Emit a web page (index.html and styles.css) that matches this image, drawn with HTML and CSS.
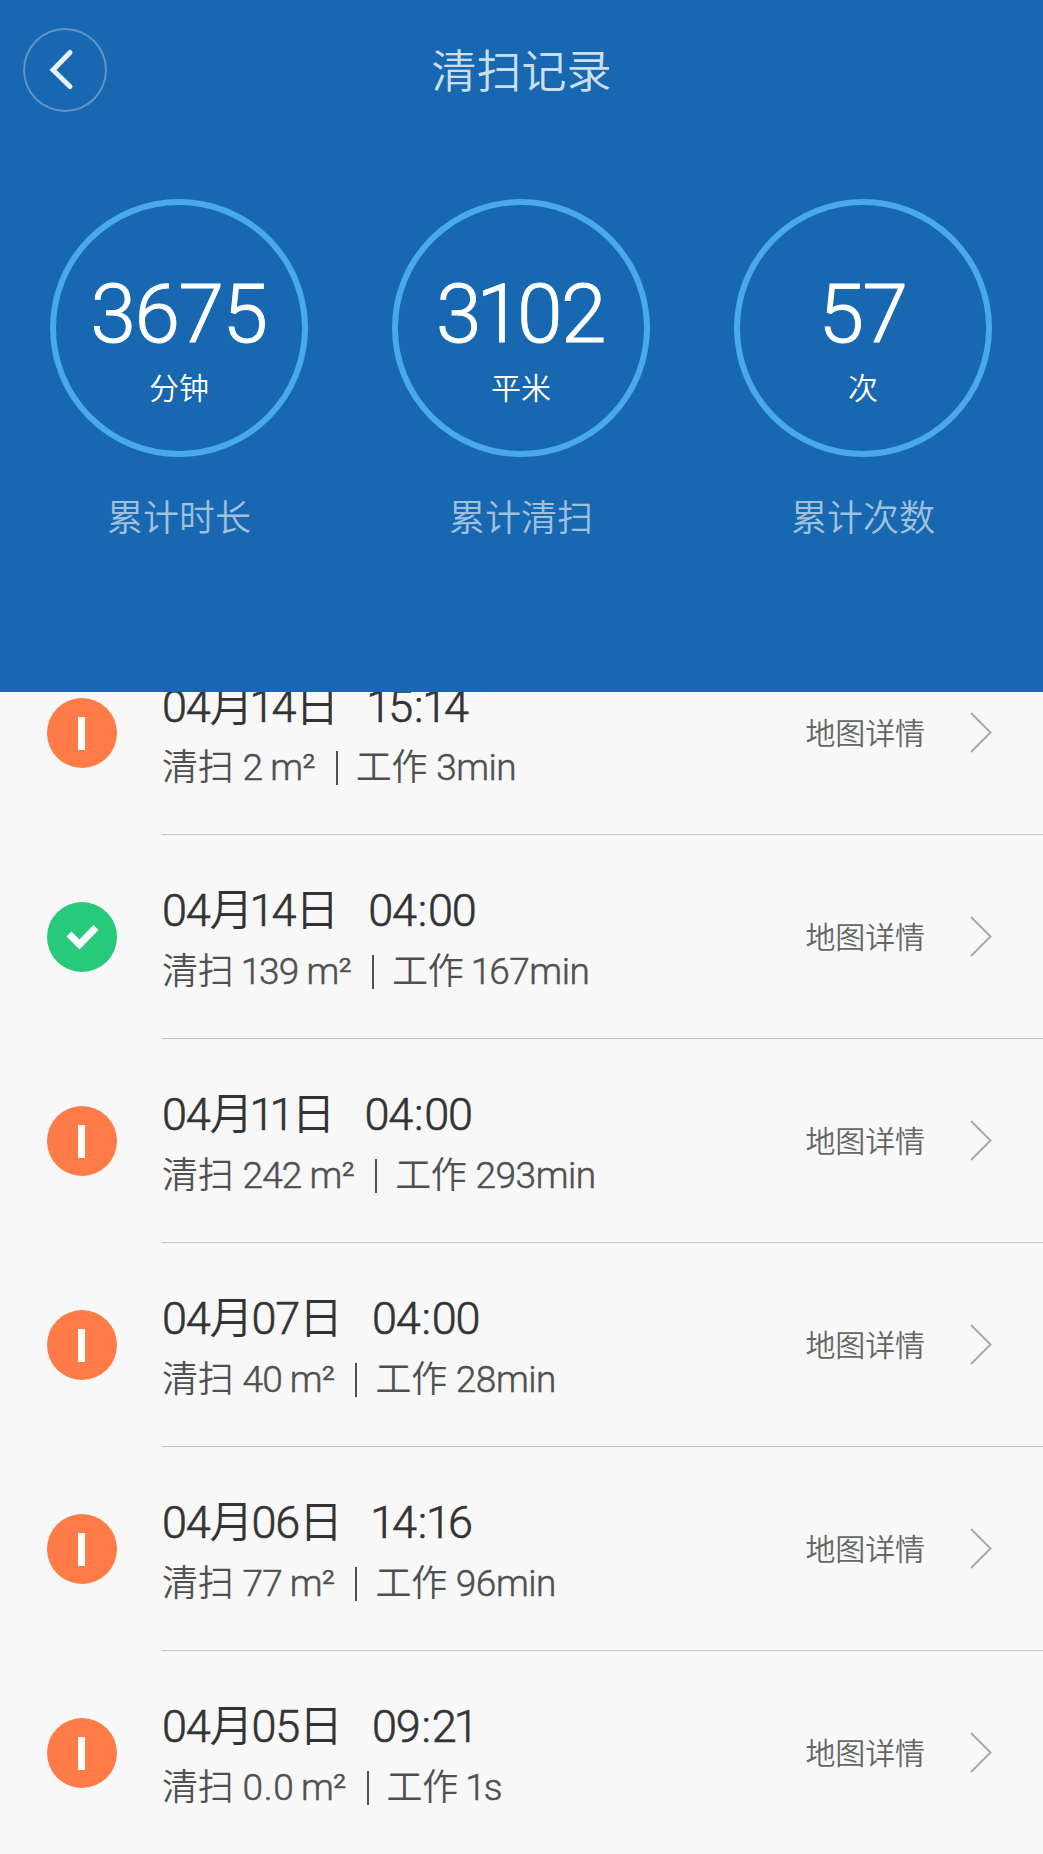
FILE: index.html
```html
<!DOCTYPE html>
<html lang="zh-CN">
  <head>
    <meta charset="UTF-8" />
    <meta name="viewport" content="width=device-width, initial-scale=1.0" />
    <title>清扫记录</title>
    <link rel="stylesheet" href="styles.css">
  </head>
  <body>
    <header class="header">
      <div class="topbar">
        <button class="back">
          <svg width="84" height="84" viewBox="0 0 84 84">
            <path d="M47 24.5 L30 42 L47 58.5" />
          </svg>
        </button>
        <h1 class="title">清扫记录</h1>
      </div>
      <div class="stats">
        <div class="stat">
          <div class="ring">
            <span class="num">3675</span>
            <span class="unit">分钟</span>
          </div>
          <p class="label">累计时长</p>
        </div>
        <div class="stat">
          <div class="ring">
            <span class="num">3<i>1</i>02</span>
            <span class="unit">平米</span>
          </div>
          <p class="label">累计清扫</p>
        </div>
        <div class="stat">
          <div class="ring">
            <span class="num">57</span>
            <span class="unit">次</span>
          </div>
          <p class="label">累计次数</p>
        </div>
      </div>
    </header>

    <main class="list">
      <div class="row">
        <svg class="icon" viewBox="0 0 70 70"><circle class="warn" cx="35" cy="35" r="35" /><rect x="31" y="19" width="7" height="33" fill="#fff" /></svg>
        <div class="info">
          <p class="date"><span>04<b>月</b><i>1</i>4<b>日</b></span><span><i>1</i>5<em>:</em><i>1</i>4</span></p>
          <p class="detail"><b>清扫</b><span class="area">2</span><span class="m2">m²</span><span class="sep"></span><b>工作</b><span class="work">3min</span></p>
        </div>
        <span class="map">地图详情</span>
        <svg class="arrow" viewBox="0 0 22 42"><path d="M1 1 L20.5 20.5 L1 40" /></svg>
      </div>
      <div class="row">
        <svg class="icon" viewBox="0 0 70 70"><circle class="ok" cx="35" cy="35" r="35" /><path class="tick" d="M22 32 L32.5 42.5 L49 25.5" /></svg>
        <div class="info">
          <p class="date"><span>04<b>月</b><i>1</i>4<b>日</b></span><span>04<em>:</em>00</span></p>
          <p class="detail"><b>清扫</b><span class="area"><i>1</i>39</span><span class="m2">m²</span><span class="sep"></span><b>工作</b><span class="work"><i>1</i>67min</span></p>
        </div>
        <span class="map">地图详情</span>
        <svg class="arrow" viewBox="0 0 22 42"><path d="M1 1 L20.5 20.5 L1 40" /></svg>
      </div>
      <div class="row">
        <svg class="icon" viewBox="0 0 70 70"><circle class="warn" cx="35" cy="35" r="35" /><rect x="31" y="19" width="7" height="33" fill="#fff" /></svg>
        <div class="info">
          <p class="date"><span>04<b>月</b><i>1</i><i>1</i><b>日</b></span><span>04<em>:</em>00</span></p>
          <p class="detail"><b>清扫</b><span class="area">242</span><span class="m2">m²</span><span class="sep"></span><b>工作</b><span class="work">293min</span></p>
        </div>
        <span class="map">地图详情</span>
        <svg class="arrow" viewBox="0 0 22 42"><path d="M1 1 L20.5 20.5 L1 40" /></svg>
      </div>
      <div class="row">
        <svg class="icon" viewBox="0 0 70 70"><circle class="warn" cx="35" cy="35" r="35" /><rect x="31" y="19" width="7" height="33" fill="#fff" /></svg>
        <div class="info">
          <p class="date"><span>04<b>月</b>07<b>日</b></span><span>04<em>:</em>00</span></p>
          <p class="detail"><b>清扫</b><span class="area">40</span><span class="m2">m²</span><span class="sep"></span><b>工作</b><span class="work">28min</span></p>
        </div>
        <span class="map">地图详情</span>
        <svg class="arrow" viewBox="0 0 22 42"><path d="M1 1 L20.5 20.5 L1 40" /></svg>
      </div>
      <div class="row">
        <svg class="icon" viewBox="0 0 70 70"><circle class="warn" cx="35" cy="35" r="35" /><rect x="31" y="19" width="7" height="33" fill="#fff" /></svg>
        <div class="info">
          <p class="date"><span>04<b>月</b>06<b>日</b></span><span><i>1</i>4<em>:</em><i>1</i>6</span></p>
          <p class="detail"><b>清扫</b><span class="area">77</span><span class="m2">m²</span><span class="sep"></span><b>工作</b><span class="work">96min</span></p>
        </div>
        <span class="map">地图详情</span>
        <svg class="arrow" viewBox="0 0 22 42"><path d="M1 1 L20.5 20.5 L1 40" /></svg>
      </div>
      <div class="row">
        <svg class="icon" viewBox="0 0 70 70"><circle class="warn" cx="35" cy="35" r="35" /><rect x="31" y="19" width="7" height="33" fill="#fff" /></svg>
        <div class="info">
          <p class="date"><span>04<b>月</b>05<b>日</b></span><span>09<em>:</em>2<i>1</i></span></p>
          <p class="detail"><b>清扫</b><span class="area">0<em>.</em>0</span><span class="m2">m²</span><span class="sep"></span><b>工作</b><span class="work"><i>1</i>s</span></p>
        </div>
        <span class="map">地图详情</span>
        <svg class="arrow" viewBox="0 0 22 42"><path d="M1 1 L20.5 20.5 L1 40" /></svg>
      </div>
    </main>
  </body>
</html>
```

FILE: styles.css
```css
* {
  box-sizing: border-box;
}
body {
  margin: 0;
  height: 1854px;
  display: flex;
  flex-direction: column;
  overflow: hidden;
  background-color: #f8f8f8;
  font-family: Roboto, 'Noto Sans CJK SC', sans-serif;
  font-weight: 350;
}
p,
h1 {
  margin: 0;
  font-weight: 350;
}
b,
i,
em {
  font-weight: inherit;
  font-style: normal;
}
/* the digit 1 is narrower than the others */
i {
  margin: 0 -0.043em;
}
.header {
  flex: none;
  height: 692px;
  background-color: #1768b0;
  color: #ffffff;
}
.topbar {
  display: grid;
  grid-template-columns: 84px 1fr 84px;
  align-items: center;
  padding: 28px 23px 0;
}
.back {
  width: 84px;
  height: 84px;
  padding: 0;
  border: none;
  border-radius: 50%;
  box-shadow: inset 0 0 0 2px rgba(255, 255, 255, 0.3);
  background: none;
}
.back svg {
  display: block;
}
.back path {
  fill: none;
  stroke: #e8f0f7;
  stroke-width: 5;
  stroke-linecap: round;
  stroke-linejoin: miter;
}
.title {
  padding-top: 5px;
  font-size: 45px;
  line-height: 60px;
  text-align: center;
  color: rgba(255, 255, 255, 0.8);
}
.stats {
  display: flex;
  justify-content: space-between;
  padding: 87px 51px 0 50px;
}
.stat {
  width: 258px;
  text-align: center;
}
.ring {
  display: flex;
  flex-direction: column;
  align-items: center;
  height: 258px;
  padding-top: 59px;
  border: 6px solid #4aa9e8;
  border-radius: 50%;
}
.num {
  margin-left: -1px;
  font-size: 82px;
  line-height: 100px;
  letter-spacing: -1.5px;
  -webkit-text-stroke: 1px #ffffff;
}
.unit {
  margin-top: 5px;
  font-size: 30px;
  line-height: 40px;
}
.label {
  margin-top: 37px;
  font-size: 36px;
  line-height: 50px;
  color: rgba(255, 255, 255, 0.6);
}

/* the list is scrolled a little, its first row goes under the header */
.list {
  flex: 1;
  display: flex;
  flex-direction: column;
  justify-content: flex-end;
  overflow: hidden;
  margin-bottom: -1px;
}
.row {
  flex: none;
  display: flex;
  align-items: center;
  height: 204px;
  padding: 0 51px 0 47px;
  background: linear-gradient(#c4c4c4, #c4c4c4) 162px 100% / 100% 1px no-repeat;
}
.icon {
  width: 70px;
  height: 70px;
}
.warn {
  fill: #ff7b47;
}
.ok {
  fill: #27ca7a;
}
.tick {
  fill: none;
  stroke: #ffffff;
  stroke-width: 7;
}
.info {
  flex: 1;
  align-self: flex-start;
  padding: 46px 0 0 45px;
}
.date {
  display: flex;
  gap: 31px;
  font-size: 45px;
  line-height: 60px;
  letter-spacing: -1.2px;
  color: #333333;
  -webkit-text-stroke: 0.6px #333333;
}
.date b {
  letter-spacing: -2px;
  font-size: 44px;
}
.date em {
  margin: 0 2px;
}
.detail {
  display: flex;
  padding-top: 1px;
  font-size: 37px;
  line-height: 60px;
  letter-spacing: -0.8px;
  color: #505050;
  -webkit-text-stroke: 0.5px #505050;
}
.date b,
.detail b {
  -webkit-text-stroke-width: 0;
}
.detail b {
  font-size: 36px;
  letter-spacing: -0.3px;
}
.detail em {
  margin: 0 1.5px;
}
.area,
.work {
  margin-left: 9px;
}
.work {
  letter-spacing: -0.5px;
}
.m2 {
  margin-left: 8px;
}
.sep {
  width: 2px;
  height: 34px;
  margin: 13px 18px 0 21px;
  background-color: #505050;
}
.map {
  padding-bottom: 4px;
  font-size: 30px;
  letter-spacing: -0.1px;
  color: #666666;
}
.arrow {
  width: 22px;
  height: 42px;
  margin-left: 45px;
}
.arrow path {
  fill: none;
  stroke: #aaaaaa;
  stroke-width: 2;
}
```
